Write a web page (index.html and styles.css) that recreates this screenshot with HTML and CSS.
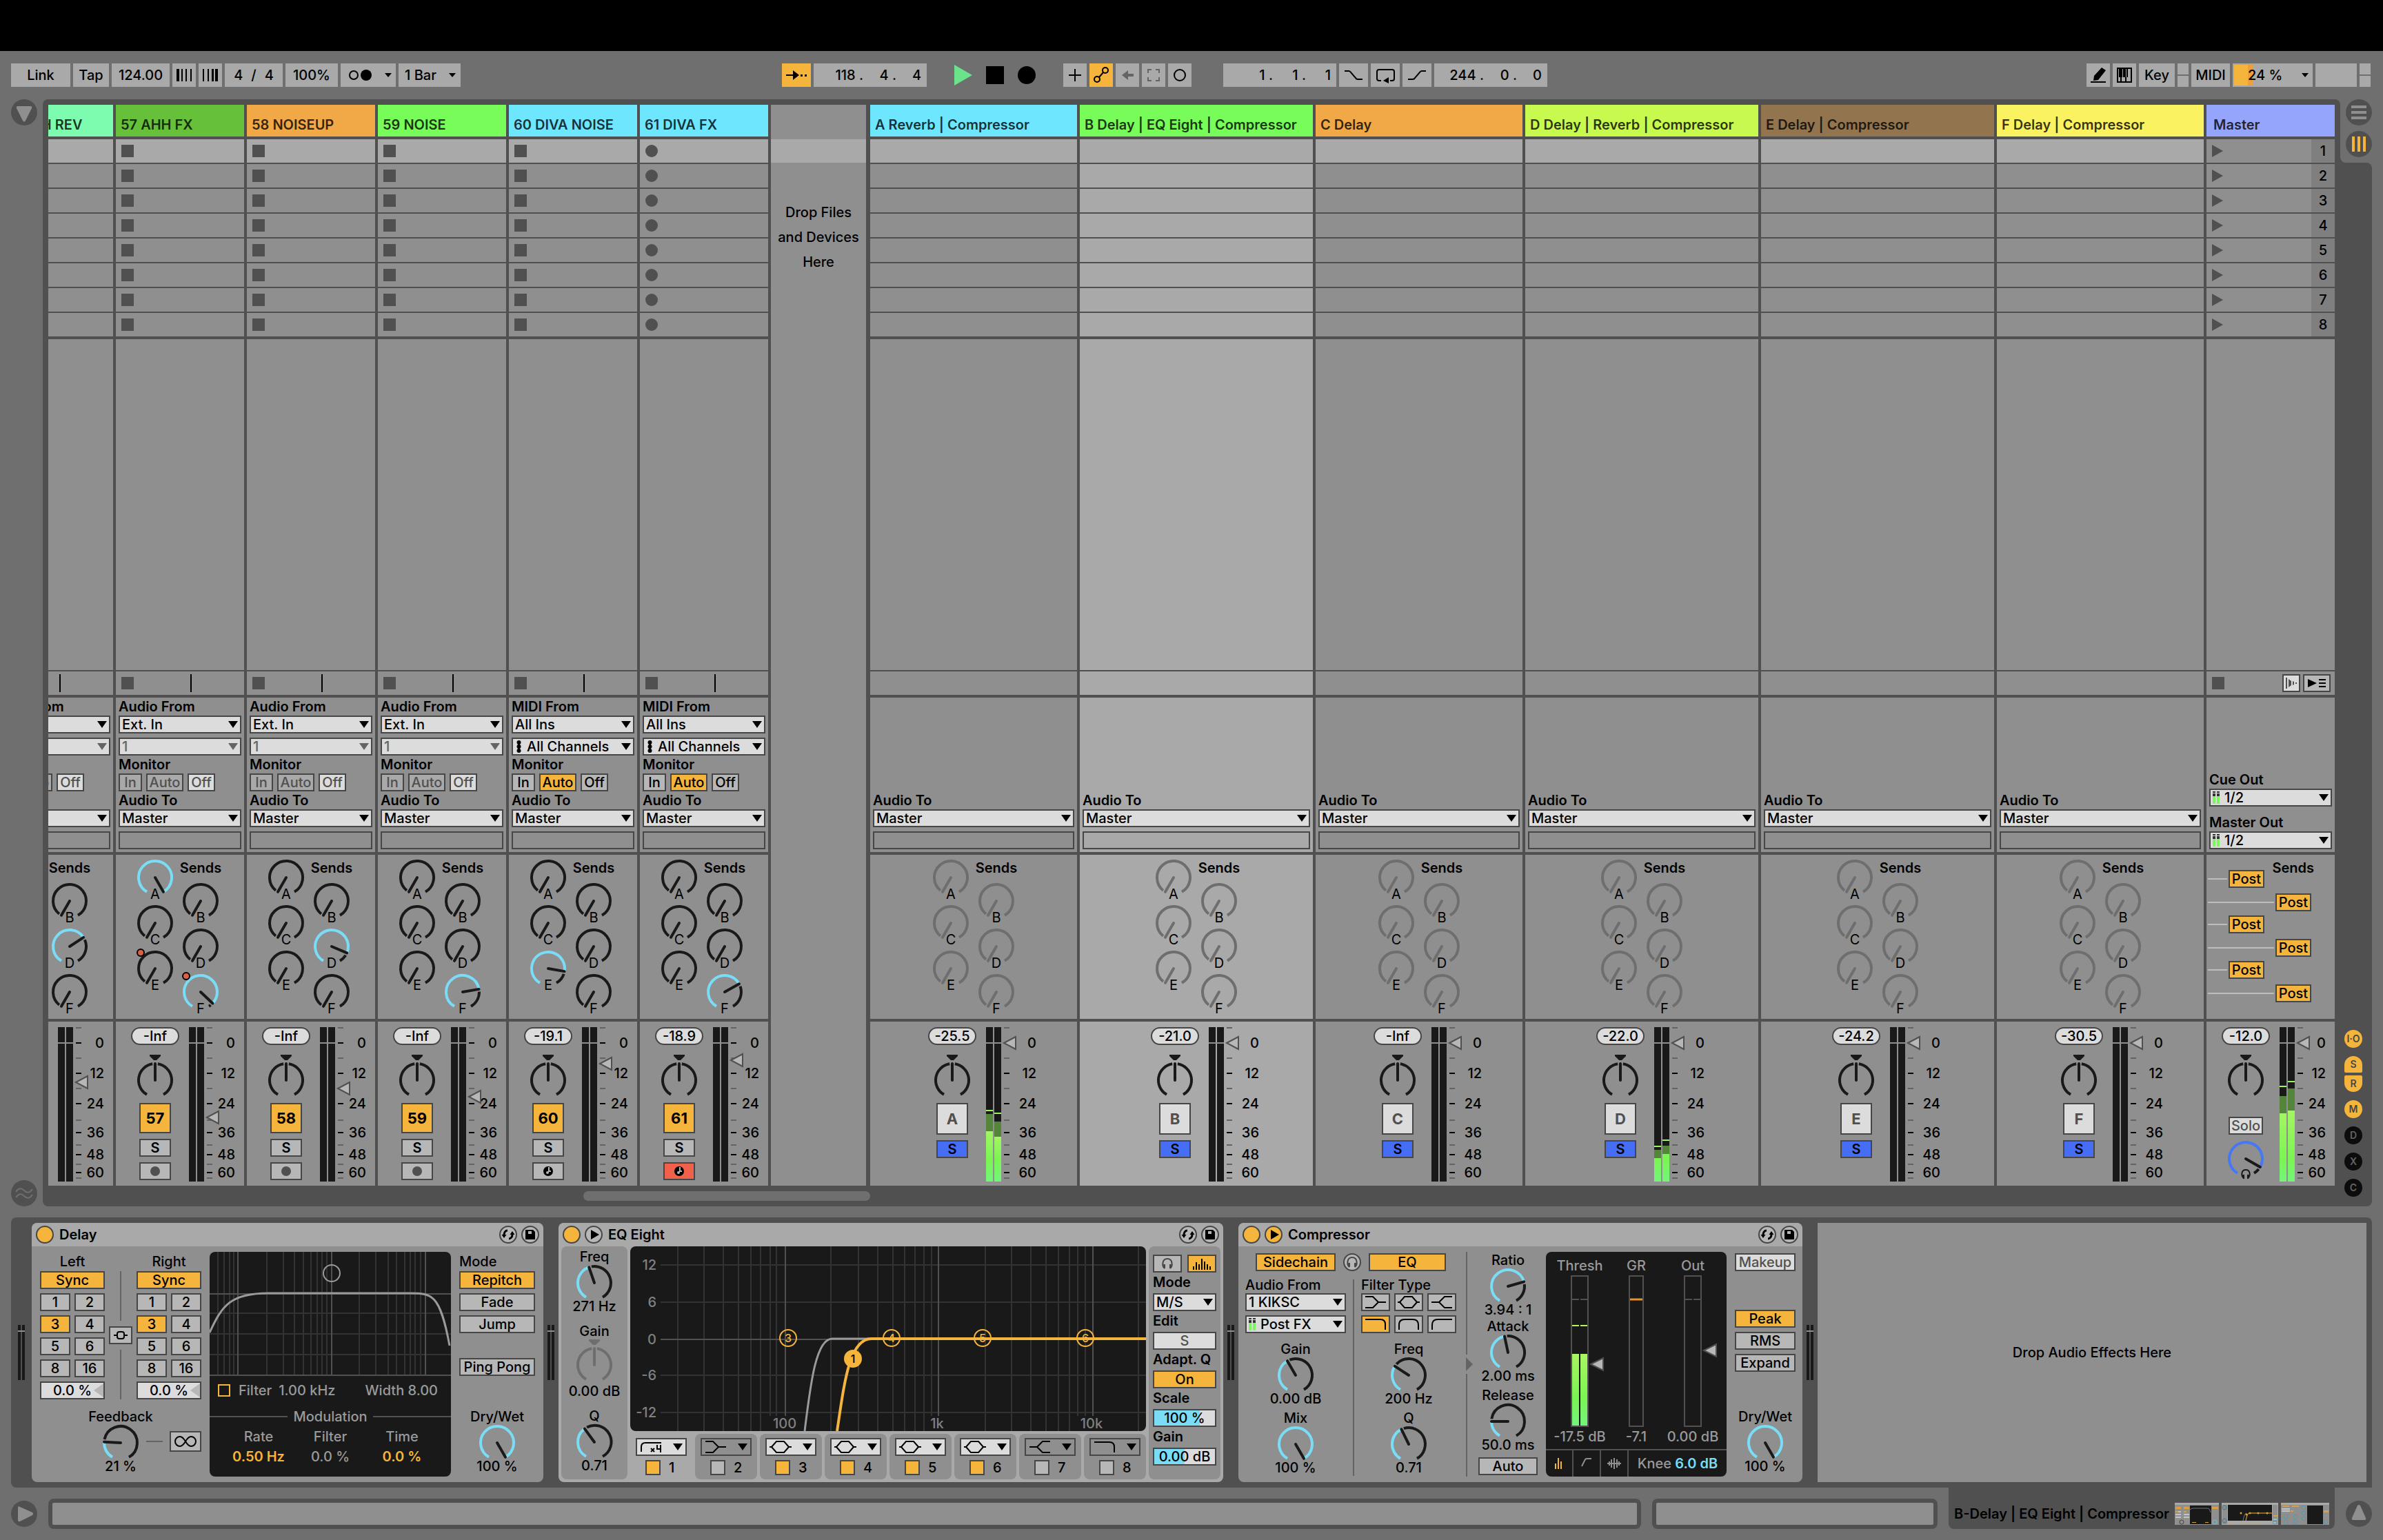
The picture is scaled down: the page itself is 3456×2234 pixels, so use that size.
FILE: index.html
```
<!DOCTYPE html>
<html lang="en">
<head>
<meta charset="utf-8">
<title>Live Set</title>
<link rel="stylesheet" href="styles.css">
</head>
<body>
<svg class="defs" aria-hidden="true">
  <symbol id="i-swap" viewBox="0 0 26 26"><path d="M7 15v-2c0-3 2-6 5-6M19 11v2c0 3-2 6-5 6" fill="none" stroke="#000" stroke-width="3"/><path d="M3.500 13h7L7 18zM15.500 13h7L19 8z"/></symbol>
  <symbol id="i-save" viewBox="0 0 26 26"><path d="M6 6h11l3 3v11H6z"/><path d="M10 8h5v4h-5z" fill="#b7b7b7"/></symbol>
  <symbol id="i-play" viewBox="0 0 26 26"><path d="M9 6l12 7-12 7z"/></symbol>
  <symbol id="i-phones" viewBox="0 0 26 26"><path d="M9 20C5 17 5 6 13 6s8 11 4 14" fill="none" stroke="currentColor" stroke-width="2"/><path d="M7 14h3v6H8zM16 14h3l-1 6h-2z" fill="currentColor"/></symbol>
  <symbol id="f-lowshelf" viewBox="0 0 32 20"><path d="M1 2h11l8 8-8 8H1M20 10h11" fill="none" stroke="#000" stroke-width="2"/></symbol>
  <symbol id="f-bell" viewBox="0 0 32 20"><path d="M0 10h3l7-8h11l7 8h4M3 10l7 8h11l7-8" fill="none" stroke="#000" stroke-width="2"/></symbol>
  <symbol id="f-highshelf" viewBox="0 0 32 20"><path d="M31 2H20l-8 8 8 8h11M12 10H1" fill="none" stroke="#000" stroke-width="2"/></symbol>
  <symbol id="f-lowpass" viewBox="0 0 32 20"><path d="M1 3h22q7 0 7 7v8" fill="none" stroke="#000" stroke-width="2"/></symbol>
  <symbol id="f-bandpass" viewBox="0 0 32 20"><path d="M2 18v-7q0-8 8-8h12q8 0 8 8v7" fill="none" stroke="#000" stroke-width="2"/></symbol>
  <symbol id="f-highpass" viewBox="0 0 32 20"><path d="M2 18v-7q0-8 8-8h21" fill="none" stroke="#000" stroke-width="2"/></symbol>
  <symbol id="f-highpass4" viewBox="0 0 32 20"><path d="M2 17v-7q0-6 6-6h23M16 12l5 5M21 12l-5 5M25 7v6h6M30 7v11" fill="none" stroke="#000" stroke-width="2"/></symbol>
  <symbol id="i-levels" viewBox="0 0 12 20"><path d="M1 1h4v2H1zM7 1h4v2H7zM1 4h4v4H1zM7 4h4v4H7z" fill="#333"/><path d="M1 8h4v11H1zM7 8h4v11H7z" fill="#7cf55f"/></symbol>
</svg>

<header class="toolbar">
  <div class="bar-group">
    <button class="tb w86">Link</button>
    <button class="tb w52">Tap</button>
    <input class="tb w84" aria-label="Tempo" value="124.00">
    <button class="tb w34" aria-label="Nudge down"><svg width="34" height="34"><path d="M6 8h4v18H6zM13 8h2v18h-2zM19 8h2v18h-2zM26 8h2v18h-2z"/></svg></button>
    <button class="tb w34" aria-label="Nudge up"><svg width="34" height="34"><path d="M6 8h2v18H6zM13 8h2v18h-2zM19 8h3v18h-3zM24 8h4v18h-4z"/></svg></button>
    <button class="tb w84 signature"><span>4</span><span>/</span><span>4</span></button>
    <button class="tb w76">100%</button>
    <button class="tb w80" aria-label="Metronome"><svg width="80" height="34"><circle cx="19" cy="17" r="6" fill="none" stroke="#000" stroke-width="2"/><circle cx="37" cy="17" r="8"/><path d="M64 14h10l-5 6z"/></svg></button>
    <div class="tb w90 quantize"><select aria-label="Quantization"><option>1 Bar</option></select></div>
  </div>
  <span class="space-a"></span>
  <div class="bar-group">
    <button class="tb w42 on" aria-label="Follow"><svg width="42" height="34"><path d="M6 16h10v-6l9 7-9 7v-6H6zM27 16h3v3h-3zM33 16h3v3h-3z"/></svg></button>
    <div class="tb position"><input aria-label="Bar" value="118 ."><input aria-label="Beat" value="4 ."><input aria-label="Sixteenth" value="4"></div>
  </div>
  <div class="bar-group transport">
    <button aria-label="Play"><svg width="26" height="34"><path d="M0 2v30l26-15z" fill="#6be38b"/></svg></button>
    <button aria-label="Stop"><svg width="26" height="34"><path d="M0 4h26v26H0z"/></svg></button>
    <button aria-label="Record"><svg width="26" height="34"><circle cx="13" cy="17" r="13"/></svg></button>
  </div>
  <div class="bar-group">
    <button class="tb w34" aria-label="Overdub"><svg width="34" height="34"><path d="M16 8h2v8h8v2h-8v8h-2v-8H8v-2h8z"/></svg></button>
    <button class="tb w34 on" aria-label="Automation arm"><svg width="34" height="34" fill="none" stroke="#000" stroke-width="2"><circle cx="23" cy="10" r="4"/><circle cx="11" cy="23" r="4"/><path d="M14 20l6-7"/></svg></button>
    <button class="tb w34" aria-label="Re-enable automation"><svg width="34" height="34"><path d="M9 17l9-7v5h8v4h-8v5z" fill="#646464"/></svg></button>
    <button class="tb w34" aria-label="Capture"><svg width="34" height="34"><path d="M9 14V9h5M20 9h5v5M25 20v5h-5M14 25H9v-5" fill="none" stroke="#646464" stroke-width="2"/></svg></button>
    <button class="tb w34" aria-label="Session record"><svg width="34" height="34"><circle cx="17" cy="17" r="8" fill="none" stroke="#000" stroke-width="2"/></svg></button>
  </div>
  <div class="bar-group loop">
    <div class="tb position"><input aria-label="Loop start bar" value="1 ."><input aria-label="Loop start beat" value="1 ."><input aria-label="Loop start sixteenth" value="1"></div>
    <button class="tb w42" aria-label="Punch in"><svg width="42" height="34"><path d="M8 11h6q2 0 3 2l7 8q1 2 3 2h7" fill="none" stroke="#000" stroke-width="2"/></svg></button>
    <button class="tb w42" aria-label="Loop"><svg width="42" height="34"><path d="M15 25h-3q-3 0-3-3V12q0-3 3-3h19q3 0 3 3v10q0 3-3 3h-3" fill="none" stroke="#000" stroke-width="2"/><path d="M26 20v9l-8-4z"/></svg></button>
    <button class="tb w42" aria-label="Punch out"><svg width="42" height="34"><path d="M8 23h7q2 0 3-2l7-8q1-2 3-2h6" fill="none" stroke="#000" stroke-width="2"/></svg></button>
    <div class="tb position"><input aria-label="Loop bars" value="244 ."><input aria-label="Loop beats" value="0 ."><input aria-label="Loop sixteenths" value="0"></div>
  </div>
  <span class="space-b"></span>
  <div class="bar-group">
    <button class="tb w34" aria-label="Draw mode"><svg width="34" height="34"><path d="M22 6l6 4-11 14-7 1 1-7zM6 26h22v2H6z"/></svg></button>
    <button class="tb w34" aria-label="Computer keyboard"><svg width="34" height="34"><path d="M6 6h22v22H6z"/><path d="M8 8h1v12h2v6H8zM14 8h1v12h3v6h-5v-6h1zM19 8h1v12h2v-12h4v18h-6v-6h-1z" fill="#a9a9a9"/></svg></button>
    <button class="tb w52">Key</button>
    <span class="lamps"><i></i><i></i></span>
    <button class="tb w56">MIDI</button>
    <button class="tb cpu">24 %<svg width="10" height="6"><path d="M0 0h10l-5 6z"/></svg></button>
    <span class="tb w60"></span>
    <span class="lamps"><i></i><i></i></span>
  </div>
</header>

<main class="session">
  <div class="rail">
    <button class="round" aria-label="Show browser"><svg width="38" height="38"><path d="M10 10h18q3 0 2 3l-9 18q-2 3-4 0L8 13q-1-3 2-3z" fill="#8f8f8f"/></svg></button>
    <button class="round" aria-label="Groove pool"><svg width="38" height="38" fill="none" stroke="#6f6f6f" stroke-width="2"><path d="M7 17c4-6 8-6 12-2s8 4 12-2M7 25c4-6 8-6 12-2s8 4 12-2"/></svg></button>
  </div>
  <section class="mixer-panel">
    <div class="columns">
      <div class="tracks" id="tracks"></div>
      <div class="drop-tracks"><div class="drop-slot"></div><p>Drop Files<br>and Devices<br>Here</p></div>
      <div class="returns" id="returns"></div>
    </div>
    <div class="scrollbar"><span></span></div>
  </section>
  <div class="rail-right">
    <div class="view-switch">
      <button class="round" aria-label="Arrangement view"><svg width="38" height="38"><path d="M8 9h22v4H8zM8 17h22v4H8zM8 25h22v4H8z" fill="#8f8f8f"/></svg></button>
      <button class="round" aria-label="Session view"><svg width="38" height="38"><path d="M9 8h4v22H9zM17 8h4v22h-4zM25 8h4v22h-4z" fill="#f5b43c"/></svg></button>
    </div>
    <div class="sections">
      <button class="dot">I·O</button>
      <span class="dot-pair"><button class="dot">S</button><button class="dot">R</button></span>
      <button class="dot">M</button>
      <button class="dot dark">D</button>
      <button class="dot dark">X</button>
      <button class="dot dark">C</button>
    </div>
  </div>
</main>

<section class="devices">
  <div class="dev-meter"><i></i><i></i></div>

  <article class="device delay">
    <header><button class="led" aria-label="Delay on"></button><h2>Delay</h2><button class="led icon" aria-label="Hot-swap preset"><svg><use href="#i-swap"/></svg></button><button class="led icon" aria-label="Save preset"><svg><use href="#i-save"/></svg></button></header>
    <div class="delay-body">
      <div class="delay-time">
        <div class="delay-cols">
          <div class="beats"><h3>Left</h3><button class="btn wide on">Sync</button><button class="btn">1</button><button class="btn">2</button><button class="btn on">3</button><button class="btn">4</button><button class="btn">5</button><button class="btn">6</button><button class="btn">8</button><button class="btn">16</button><span class="offset"><input class="field" aria-label="Left offset" value="0.0 %"></span></div>
          <div class="link"><i></i><button class="btn" aria-label="Link channels"><svg width="30" height="22" fill="none" stroke="#000" stroke-width="2"><path d="M5 11h5M20 11h5M13 6h4q3 0 3 3v4q0 3-3 3h-4q-3 0-3-3V9q0-3 3-3z"/></svg></button><i></i></div>
          <div class="beats"><h3>Right</h3><button class="btn wide on">Sync</button><button class="btn">1</button><button class="btn">2</button><button class="btn on">3</button><button class="btn">4</button><button class="btn">5</button><button class="btn">6</button><button class="btn">8</button><button class="btn">16</button><span class="offset"><input class="field" aria-label="Right offset" value="0.0 %"></span></div>
        </div>
        <div class="feedback">
          <div class="unit"><span>Feedback</span><span class="dial" data-v="0.21" data-name="Feedback"></span><span>21 %</span></div>
          <i></i>
          <button class="btn freeze" aria-label="Freeze"><svg width="32" height="20" viewBox="-1 0 32 20"><path d="M15 10c-3-5-5-7-8-7a7 7 0 0 0 0 14c3 0 5-2 8-7s5-7 8-7a7 7 0 0 1 0 14c-3 0-5-2-8-7z" fill="none" stroke="#000" stroke-width="2"/></svg></button>
        </div>
      </div>
      <div class="screen delay-screen">
        <svg class="graph" width="350" height="180" fill="none">
          <path d="M12 0v179M21 0v179M29 0v179M35 0v179M83 0v179M107 0v179M123 0v179M136 0v179M147 0v179M156 0v179M163 0v179M170 0v179M217 0v179M241 0v179M259 0v179M271 0v179M283 0v179M291 0v179M298 0v179M306 0v179M0 89h350M0 119h350M0 149h350" stroke="#333" stroke-width="2"/>
          <path d="M41 0v179M177 0v179M313 0v179M0 61h350M0 179h350" stroke="#505050" stroke-width="2"/>
          <path d="M0 117C18 78 30 60 85 60H290C322 60 334 60 348 136" stroke="#9a9a9a" stroke-width="3"/>
          <circle cx="177" cy="31" r="12" stroke="#9a9a9a" stroke-width="2"/>
        </svg>
        <div class="filter-row"><label><input type="checkbox">Filter</label><span>1.00 kHz</span><span class="push">Width 8.00</span></div>
        <div class="mod-title"><i></i>Modulation<i></i></div>
        <div class="mod-grid"><span>Rate</span><span>Filter</span><span>Time</span><b>0.50 Hz</b><span>0.0 %</span><b>0.0 %</b></div>
      </div>
      <div class="delay-mode">
        <h3>Mode</h3>
        <button class="btn on">Repitch</button><button class="btn">Fade</button><button class="btn">Jump</button>
        <button class="btn ping">Ping Pong</button>
        <div class="unit"><span>Dry/Wet</span><span class="dial" data-v="1" data-name="Delay dry/wet"></span><span>100 %</span></div>
      </div>
    </div>
  </article>

  <div class="dev-meter"><i></i><i></i></div>

  <article class="device eq">
    <header><button class="led" aria-label="EQ Eight on"></button><button class="led icon" aria-label="Expand display"><svg><use href="#i-play"/></svg></button><h2>EQ Eight</h2><button class="led icon" aria-label="Hot-swap preset"><svg><use href="#i-swap"/></svg></button><button class="led icon" aria-label="Save preset"><svg><use href="#i-save"/></svg></button></header>
    <div class="eq-body">
      <div class="eq-side knobs">
        <div class="unit"><span>Freq</span><span class="dial" data-v="0.437" data-name="Band frequency"></span><span>271 Hz</span></div>
        <div class="unit centred"><span>Gain</span><span class="dial" data-kind="pan" data-off="1" data-v="0.5" data-name="Band gain"></span><span>0.00 dB</span></div>
        <div class="unit"><span>Q</span><span class="dial" data-v="0.38" data-name="Band Q"></span><span>0.71</span></div>
      </div>
      <div class="eq-main">
        <svg class="screen eq-screen" width="748" height="268" fill="none">
          <path d="M69 0v268M107 0v268M135 0v268M157 0v268M175 0v268M189 0v268M203 0v246M212 0v246M291 0v268M331 0v268M359 0v268M381 0v268M398 0v268M413 0v268M426 0v268M437 0v246M515 0v268M553 0v268M581 0v268M603 0v268M621 0v268M637 0v268M649 0v246M660 0v246M737 0v268M44 27h704M44 81h704M44 187h704M44 241h704" stroke="#333" stroke-width="2"/>
          <path d="M225 0v246M447 0v246M671 0v246M44 135h704" stroke="#505050" stroke-width="2"/>
          <g class="axis"><text x="38" y="34">12</text><text x="38" y="88">6</text><text x="38" y="142">0</text><text x="38" y="194">-6</text><text x="38" y="248">-12</text></g>
          <g class="axis-x"><text x="224" y="264">100</text><text x="445" y="264">1k</text><text x="669" y="264">10k</text></g>
          <path d="M253 268C262 194 270 134 293 134H350" stroke="#9a9a9a" stroke-width="3"/>
          <path d="M300 268C311 194 318 134 350 134H748" stroke="#f5b43c" stroke-width="4"/>
          <g stroke="#f5b43c" stroke-width="2"><circle cx="229" cy="133" r="12"/><circle cx="379" cy="133" r="12"/><circle cx="511" cy="133" r="12"/><circle cx="660" cy="133" r="12"/></g>
          <circle cx="323" cy="163" r="13" fill="#f5b43c"/>
          <g class="nodes"><text x="229" y="139">3</text><text x="379" y="139">4</text><text x="511" y="139">5</text><text x="660" y="139">6</text></g>
          <text class="node-on" x="323" y="169">1</text>
        </svg>
        <div class="bands" id="bands"></div>
      </div>
      <div class="eq-side eq-opts">
        <div class="pair"><button class="btn dim" aria-label="Audition"><svg width="26" height="26"><use href="#i-phones"/></svg></button><button class="btn on" aria-label="Analyze"><svg width="30" height="20"><path d="M2 14h2v5H2zM6 8h2v11H6zM10 11h2v8h-2zM14 3h2v16h-2zM18 7h2v12h-2zM22 11h2v8h-2zM26 14h2v5h-2z"/></svg></button></div>
        <label for="eqmode">Mode</label><span class="menu"><select id="eqmode"><option>M/S</option></select></span>
        <label for="eqedit">Edit</label><button class="btn light" id="eqedit">S</button>
        <label for="eqadapt">Adapt. Q</label><button class="btn on" id="eqadapt">On</button>
        <label for="eqscale">Scale</label><input class="field fill-scale" id="eqscale" value="100 %">
        <label for="eqgain">Gain</label><input class="field fill-gain" id="eqgain" value="0.00 dB">
      </div>
    </div>
  </article>

  <div class="dev-meter"><i></i><i></i></div>

  <article class="device comp">
    <header><button class="led" aria-label="Compressor on"></button><button class="led icon on" aria-label="Show sidechain"><svg><use href="#i-play"/></svg></button><h2>Compressor</h2><button class="led icon" aria-label="Hot-swap preset"><svg><use href="#i-swap"/></svg></button><button class="led icon" aria-label="Save preset"><svg><use href="#i-save"/></svg></button></header>
    <div class="comp-body">
      <div class="sidechain">
        <div class="sc-top"><button class="btn on w116">Sidechain</button><button class="led icon dim" aria-label="Listen"><svg><use href="#i-phones"/></svg></button><button class="btn on w112">EQ</button></div>
        <div class="sc-cols">
          <div class="sc-src">
            <label for="scfrom">Audio From</label>
            <span class="menu"><select id="scfrom"><option>1 KIKSC</option></select></span>
            <span class="menu with-icon"><svg width="12" height="20"><use href="#i-levels"/></svg><select aria-label="Tap point"><option>Post FX</option></select></span>
            <div class="unit"><span>Gain</span><span class="dial" data-v="0.4" data-name="Sidechain gain"></span><span>0.00 dB</span></div>
            <div class="unit"><span>Mix</span><span class="dial" data-v="1" data-name="Sidechain mix"></span><span>100 %</span></div>
          </div>
          <i class="rule"></i>
          <div class="sc-eq">
            <h3>Filter Type</h3>
            <div class="types">
              <button class="btn" aria-label="Low shelf"><svg><use href="#f-lowshelf"/></svg></button><button class="btn" aria-label="Bell"><svg><use href="#f-bell"/></svg></button><button class="btn" aria-label="High shelf"><svg><use href="#f-highshelf"/></svg></button>
              <button class="btn on" aria-label="Low-pass"><svg><use href="#f-lowpass"/></svg></button><button class="btn" aria-label="Band-pass"><svg><use href="#f-bandpass"/></svg></button><button class="btn" aria-label="High-pass"><svg><use href="#f-highpass"/></svg></button>
            </div>
            <div class="unit"><span>Freq</span><span class="dial" data-v="0.31" data-name="Sidechain frequency"></span><span>200 Hz</span></div>
            <div class="unit"><span>Q</span><span class="dial" data-v="0.413" data-name="Sidechain Q"></span><span>0.71</span></div>
          </div>
        </div>
      </div>
      <div class="fold"><i></i><svg width="10" height="20"><path d="M0 0l10 10L0 20z" fill="#646464"/></svg><i></i></div>
      <div class="envelope">
        <div class="unit"><span>Ratio</span><span class="dial" data-v="0.747" data-name="Ratio"></span><span>3.94 : 1</span></div>
        <div class="unit"><span>Attack</span><span class="dial" data-v="0.46" data-name="Attack"></span><span>2.00 ms</span></div>
        <div class="unit"><span>Release</span><span class="dial" data-v="0.2" data-name="Release"></span><span>50.0 ms</span></div>
        <button class="btn">Auto</button>
      </div>
      <div class="screen comp-screen">
        <div class="comp-meters">
          <span>Thresh</span><span>GR</span><span>Out</span>
          <svg width="60" height="220"><defs><linearGradient id="lv" x1="0" y1="0" x2="0" y2="1"><stop offset="0" stop-color="#a9f562"/><stop offset="0.600" stop-color="#7bf553"/><stop offset="1" stop-color="#73f57b"/></linearGradient></defs><path d="M1 1h24v218H1zM1 35h11M14 35h11" fill="none" stroke="#505050" stroke-width="2"/><path d="M2 114h10v104H2zM14 114h10v104H14z" fill="url(#lv)"/><path d="M2 72h10v2H2zM14 72h10v2H14z" fill="#b4f55a"/><path d="M29 129l18-9v18z" fill="#b7b7b7" stroke="#505050" stroke-width="2"/></svg>
          <svg width="22" height="220"><path d="M1 1h20v218H1z" fill="none" stroke="#505050" stroke-width="2"/><path d="M2 35h18" stroke="#e8912d" stroke-width="3"/></svg>
          <svg width="60" height="220"><path d="M1 1h24v218H1zM1 35h11M14 35h11" fill="none" stroke="#505050" stroke-width="2"/><path d="M29 109l18-9v18z" fill="#b7b7b7" stroke="#505050" stroke-width="2"/></svg>
          <span>-17.5 dB</span><span>-7.1</span><span>0.00 dB</span>
        </div>
        <div class="comp-foot">
          <button aria-label="Collapsed view"><svg width="14" height="16"><path d="M1 8h2v8H1zM5 0h2v16H5zM9 5h2v11H9z" fill="#f5b43c"/></svg></button>
          <button aria-label="Transfer curve"><svg width="16" height="16"><path d="M1 12L6 2q1-1 3-1h6" fill="none" stroke="#8f8f8f" stroke-width="2"/></svg></button>
          <button aria-label="Activity view"><svg width="20" height="16"><path d="M0 8h20M3 5v6M6 2v12M10 0v16M14 2v12M17 5v6" stroke="#8f8f8f" stroke-width="2"/></svg></button>
          <span>Knee <b>6.0 dB</b></span>
        </div>
      </div>
      <div class="comp-mode">
        <button class="btn light">Makeup</button>
        <button class="btn on peak">Peak</button><button class="btn">RMS</button><button class="btn">Expand</button>
        <div class="unit"><span>Dry/Wet</span><span class="dial" data-v="1" data-name="Compressor dry/wet"></span><span>100 %</span></div>
      </div>
    </div>
  </article>

  <div class="dev-meter"><i></i><i></i></div>
  <div class="drop-devices">Drop Audio Effects Here</div>
</section>

<footer class="status">
  <button class="round" aria-label="Show info"><svg width="38" height="38"><path d="M10 10q0-3 3-1l18 8q2 2 0 4l-18 9q-3 1-3-2z" fill="#8f8f8f"/></svg></button>
  <div class="status-box grow"></div>
  <div class="status-box"></div>
  <div class="chain"><span>B-Delay | EQ Eight | Compressor</span>
    <svg width="64" height="32"><path d="M0 0h64v32H0z" fill="#8f8f8f"/><path d="M0 0h64v3H0z" fill="#a9a9a9"/><path d="M22 4h31v27H22z" fill="#191919"/><path d="M22 10q2-2 5-2h21q3 0 4 6" fill="none" stroke="#777"/><path d="M1 6h8v3H1zM13 6h8v3h-8zM54 6h9v3h-9zM1 12h4v2H1zM13 12h4v2h-4zM25 28h6v1h-6zM44 28h5v1h-5z" fill="#d9a040"/><path d="M5 12h4v2H5zM1 16h8v2H1zM13 16h8v2h-8zM1 20h8v2H1zM13 20h8v2h-8z" fill="#c4c4c4"/><circle cx="58" cy="28" r="3" fill="none" stroke="#6fc0d0"/><circle cx="10" cy="28" r="3" fill="none" stroke="#444"/></svg>
    <svg width="82" height="32"><path d="M0 0h82v32H0z" fill="#a9a9a9"/><path d="M1 3h7v28H1zM74 3h7v28h-7z" fill="#8f8f8f"/><path d="M9 3h64v23H9z" fill="#191919"/><path d="M31 26q2-11 5-11" fill="none" stroke="#777"/><path d="M35 26q2-11 5-11h33" fill="none" stroke="#f5b43c"/><g fill="#d9a040"><circle cx="28" cy="15" r="1.500"/><circle cx="36" cy="17" r="1.500"/><circle cx="41" cy="15" r="1.500"/><circle cx="53" cy="15" r="1.500"/><circle cx="66" cy="15" r="1.500"/><path d="M75 18h6v2h-6zM12 29h2v2h-2zM27 29h2v2h-2zM35 29h2v2h-2zM43 29h2v2h-2zM51 29h2v2h-2z"/></g><path d="M75 23h5v2h-5zM75 28h4v2h-4z" fill="#6fd0e0"/><circle cx="4" cy="7" r="3" fill="none" stroke="#478"/><circle cx="4" cy="26" r="3" fill="none" stroke="#478"/></svg>
    <svg width="70" height="32"><path d="M0 0h70v32H0z" fill="#8f8f8f"/><path d="M0 0h70v3H0z" fill="#a9a9a9"/><path d="M38 4h23v27H38z" fill="#191919"/><path d="M2 4h10v2H2zM16 4h10v2H16zM14 11h4v2h-4zM62 11h7v3h-7z" fill="#d9a040"/><path d="M1 8h12v2H1zM1 11h12v2H1z" fill="#c4c4c4"/><g fill="none" stroke="#5a98a5"><circle cx="7" cy="20" r="3"/><circle cx="7" cy="28" r="3"/><circle cx="21" cy="20" r="3"/><circle cx="21" cy="28" r="3"/><circle cx="33" cy="7" r="3"/><circle cx="33" cy="15" r="3"/><circle cx="33" cy="23" r="3"/><circle cx="65" cy="28" r="3"/></g></svg>
  </div>
  <button class="round" aria-label="Hide device view"><svg width="38" height="38"><path d="M17 7q2-2 4 0l8 18q1 3-2 3H11q-3 0-2-3z" fill="#8f8f8f"/></svg></button>
</footer>
<script src="mixer.js"></script>
</body>
</html>
```
FILE: styles.css
```
* { box-sizing: border-box; margin: 0; padding: 0; }
body {
  min-height: 100vh; display: flex; flex-direction: column;
  background: #6f6f6f; border-top: 74px solid #000; color: #000;
  font: 500 20px/24px Inter, "Liberation Sans", sans-serif;
}
button, input, select { font: inherit; color: inherit; border: 0; background: none; border-radius: 0; appearance: none; opacity: 1; }
button { display: flex; align-items: center; justify-content: center; white-space: nowrap; }
svg { display: block; flex: none; }
i { display: block; }
h2, h3 { font: inherit; }
.defs { display: none; }

/* Toolbar */
.toolbar { display: flex; height: 70px; padding: 18px 18px 18px 16px; flex: none; }
.bar-group { display: flex; gap: 4px; }
.space-a { flex: 466; }
.space-b { flex: 782; }
.tb { height: 34px; background: #a9a9a9; text-align: center; }
.tb.on { background: #f5b43c; }
.w34 { width: 34px; } .w42 { width: 42px; } .w52 { width: 52px; } .w56 { width: 56px; }
.w60 { width: 60px; } .w76 { width: 76px; } .w80 { width: 80px; } .w84 { width: 84px; }
.w86 { width: 86px; } .w90 { width: 90px; } .w112 { width: 112px; } .w116 { width: 116px; }
.signature { gap: 12px; }
.quantize { display: flex; align-items: center; padding: 0 7px 0 9px; }
.quantize select { flex: 1; min-width: 0; }
.quantize::after { content: ""; border: 5px solid transparent; border-top: 6px solid #000; border-bottom: 0; }
.position { display: flex; width: 164px; padding-right: 8px; }
.position input { text-align: right; min-width: 0; flex: 1; }
.position input:nth-child(2) { flex: none; width: 48px; }
.position input:nth-child(3) { flex: none; width: 36px; }
.transport { gap: 20px; margin: 0 40px; }
.loop { margin-left: 46px; }
.lamps { display: flex; flex-direction: column; gap: 2px; width: 16px; }
.lamps i { flex: 1; background: #a9a9a9; }
.cpu { width: 116px; justify-content: space-between; padding: 0 6px 0 20px; border: solid #a9a9a9; border-width: 2px 0 2px 2px; background: linear-gradient(90deg, #f5b43c 20px, #ef9f37 20px 28px, #a9a9a9 28px); }

/* Session */
.session { flex: 1; display: flex; padding: 0 16px; }
.rail { width: 46px; display: flex; flex-direction: column; justify-content: space-between; }
.round { width: 38px; height: 38px; border-radius: 50%; background: #505050; flex: none; }
.mixer-panel { flex: 1; min-width: 0; display: flex; flex-direction: column; padding: 8px 8px 0; background: #505050; border-radius: 8px 8px 0 8px; }
.columns { flex: 1; display: flex; min-width: 0; }
.tracks { display: flex; gap: 4px; overflow: hidden; width: 1048px; padding-right: 4px; flex: none; }
.tracks .col:first-child { margin-left: -92px; }
.returns { display: flex; gap: 4px; margin-left: 6px; }
.col { flex: none; width: 186px; display: flex; flex-direction: column; }
.col.w300 { width: 300px; }
.col.w338 { width: 338px; }
.drop-tracks { flex: 1; background: #8f8f8f; padding-top: 50px; text-align: center; line-height: 36px; }
.drop-slot { height: 34px; margin-bottom: 54px; background: #a9a9a9; }
.scrollbar { height: 30px; padding: 8px 0 8px 776px; }
.scrollbar span { display: block; width: 416px; height: 14px; border-radius: 7px; background: #6f6f6f; }

.name { height: 46px; padding: 16px 0 4px 7px; line-height: 26px; font-weight: 600; color: rgba(0,0,0,.8); margin-bottom: 4px; white-space: nowrap; overflow: hidden; }
.master .name { padding-left: 10px; }
.slots { display: grid; gap: 2px; list-style: none; margin-bottom: 4px; }
.slots li { height: 34px; background: #8f8f8f; display: flex; align-items: center; padding-left: 8px; }
.slots li:first-child { background: #a9a9a9; }
.slots i { width: 18px; height: 18px; background: #505050; }
.slots i.disc { border-radius: 50%; }
.master .slots li { background: #8f8f8f; justify-content: space-between; }
.master .slots span { width: 34px; height: 34px; line-height: 34px; background: #7f7f7f; text-align: center; }
.area { background: #8f8f8f; flex: 1; margin-bottom: 2px; }
.clip-status { background: #8f8f8f; height: 34px; margin-bottom: 4px; display: flex; align-items: center; padding: 0 6px 0 8px; }
.clip-status .stop { width: 18px; height: 18px; background: #505050; }
.clip-status .pos { width: 2px; height: 26px; background: #000; margin-left: 82px; }
.clip-status .btn { width: 26px; margin-left: 4px; }
.clip-status .btn:nth-of-type(1) { margin-left: auto; }
.clip-status .btn.back { width: 40px; }
.io { background: #8f8f8f; height: 224px; margin-bottom: 4px; padding: 0 4px 4px; display: flex; flex-direction: column; justify-content: flex-end; }
.io label, .io h4 { font-weight: 600; font-size: 20px; line-height: 26px; }
.io .menu + .menu, .io .activity { margin-top: 6px; }
.io label.spaced { margin-top: 10px; }
.activity { height: 26px; border: 2px solid #464646; }
.monitor { display: flex; gap: 6px; }
.monitor .btn { width: 34px; }
.monitor .btn:nth-child(2) { width: 54px; }
.monitor .btn:nth-child(3) { width: 40px; }
.monitor.idle { color: #505050; }
.monitor.idle .btn { background: #a9a9a9; }
.monitor.idle .btn:nth-child(3) { background: #dcdcdc; }

.sends, .strip { background: #8f8f8f; height: 238px; }
.selected .sends, .selected .strip, .selected .io, .selected .area, .selected .clip-status, .selected .slots li { background: #a9a9a9; }
.sends { margin-bottom: 4px; padding-left: 24px; display: flex; }
.is-return .sends { justify-content: center; padding: 0; }
.sends > div { width: 66px; }
.sends h4 { font-weight: 600; font-size: 20px; height: 34px; line-height: 38px; text-align: center; }
.send { position: relative; height: 66px; padding: 7px 3px 0; }
.send b { position: absolute; left: 0; right: 0; bottom: -3px; text-align: center; font-weight: 400; }
.send .auto { position: absolute; left: 6px; top: 4px; width: 12px; height: 12px; border-radius: 50%; border: 2px solid #000; background: #dc5f46; }
.dial { position: relative; display: block; width: 60px; height: 48px; flex: none; }
.dial svg { overflow: visible; }
.dial input, .scale input { position: absolute; inset: 0; width: 100%; height: 100%; opacity: 0; }

.master .sends { padding: 0 34px 0 2px; display: block; position: relative; }
.master .sends h4 { position: absolute; right: 30px; top: 0; }
.posts { padding-top: 22px; }
.post { display: flex; align-items: center; gap: 2px; width: 82px; height: 26px; margin-bottom: 8px; }
.post::before { content: ""; flex: 1; height: 2px; background: #bdbdbd; }
.post .btn { width: 52px; }
.post.right { width: 150px; margin-bottom: 6px; }

.strip { display: flex; padding: 8px 0 0 22px; }
.is-return .strip { justify-content: center; padding-left: 0; }
.strip-in { display: flex; flex: none; }
.is-return .strip-in { width: 132px; }
.controls { width: 70px; margin-right: 14px; display: flex; flex-direction: column; align-items: center; flex: none; }
.peak-level { width: 70px; height: 26px; border: 2px solid #464646; border-radius: 13px; background: #dcdcdc; margin-bottom: 25px; flex: none; }
.activator { width: 46px; height: 46px; border: 2px solid #464646; background: #f5b43c; font-weight: 700; font-size: 22px; margin: 11px 0 8px; }
.is-return .activator { background: #dcdcdc; color: #505050; }
.controls .btn { width: 46px; margin-bottom: 8px; font-weight: 600; }
.btn.solo { background: #466ef5; }
.btn.armed { background: #f0604b; }
.controls .btn.cue { width: 50px; margin: 31px 0 9px; color: #505050; background: #dcdcdc; font-weight: 500; }
.phones { margin-top: -9px; }
.meter { position: relative; display: flex; gap: 2px; height: 224px; margin-right: 4px; flex: none; }
.meter i { width: 10px; background: #191919; }
.meter::after { content: ""; position: absolute; left: 0; right: 0; top: 22px; height: 2px; background: #8f8f8f; }
.scale { position: relative; flex: none; width: 48px; height: 224px; }
.scale > svg { overflow: visible; }
.scale text { text-anchor: end; font-size: 20px; }

/* Right rail */
.rail-right { width: 46px; display: flex; flex-direction: column; background: linear-gradient(90deg, #505050 8px, transparent 8px); }
.view-switch { height: 92px; display: flex; flex-direction: column; align-items: flex-end; gap: 8px; border-bottom-left-radius: 8px; background: #6f6f6f; }
.sections { flex: 1; background: #505050; border-radius: 0 8px 8px 0; padding: 0 8px 14px 0; display: flex; flex-direction: column; justify-content: flex-end; align-items: center; gap: 12px; }
.dot { width: 26px; height: 26px; border-radius: 50%; background: #f5b43c; color: #464646; font-size: 14px; line-height: 14px; font-weight: 600; }
.dot-pair { display: grid; gap: 4px; }
.dot-pair .dot { height: 24px; border-radius: 13px 13px 2px 2px; }
.dot-pair .dot:last-child { border-radius: 2px 2px 13px 13px; }
.dot.dark { background: #0c0c0c; color: #646464; }

/* Shared controls */
.btn { height: 26px; border: 2px solid #464646; background: #b7b7b7; line-height: 22px; flex: none; }
.btn.on { background: #f5b43c; }
.btn.light { background: #dcdcdc; color: #505050; }
.btn.dim, .led.dim { color: #464646; }
.menu { position: relative; display: flex; height: 26px; border: 2px solid #464646; background: #dcdcdc; flex: none; }
.menu select { width: 100%; height: 22px; padding-left: 3px; line-height: 22px; outline: 0; }
.menu::after { content: ""; position: absolute; right: 3px; top: 6px; border: 7px solid transparent; border-top: 10px solid #000; border-bottom: 0; pointer-events: none; }
.menu.off { color: #646464; }
.menu.off::after { border-top-color: #646464; }
.menu.with-icon svg { position: absolute; left: 2px; top: 1px; }
.menu.with-icon select { padding-left: 20px; }
.field { width: 100%; height: 26px; border: 2px solid #464646; background: #dcdcdc; text-align: center; }
.unit { width: 60px; display: flex; flex-direction: column; align-items: center; white-space: nowrap; }

/* Devices */
.devices { display: flex; height: 392px; flex: none; margin: 16px 16px 0; padding: 8px 8px 8px 10px; background: #505050; border-radius: 8px 8px 0 8px; }
.device { flex: none; margin: 0 6px; border-radius: 8px; background: #8f8f8f; overflow: hidden; }
.device.delay { margin-left: 10px; width: 742px; }
.device.eq { width: 964px; background: #a9a9a9; }
.device.comp { width: 818px; }
.device > header { display: flex; align-items: center; gap: 6px; height: 34px; padding: 0 6px; background: #a9a9a9; }
.device h2 { font-weight: 600; margin-right: auto; padding-left: 2px; }
.led { width: 26px; height: 26px; border: 2px solid #464646; border-radius: 50%; background: #f5b43c; flex: none; }
.led.icon { background: #b7b7b7; }
.led.icon.on { background: #f5b43c; }
.led svg { width: 26px; height: 26px; }
.dev-meter { align-self: center; position: relative; display: flex; gap: 2px; width: 10px; height: 80px; flex: none; }
.dev-meter i { width: 4px; background: #191919; }
.dev-meter::after { content: ""; position: absolute; left: 0; right: 0; top: 8px; height: 2px; background: #8f8f8f; }
.drop-devices { flex: 1; margin-left: 6px; background: #8f8f8f; display: flex; align-items: center; justify-content: center; }
.screen { background: #191919; border-radius: 8px; color: #9a9a9a; overflow: hidden; }

.delay-body { display: flex; gap: 12px; padding: 8px 12px; }
.delay-time { width: 234px; }
.delay-cols { display: flex; gap: 6px; }
.beats { display: grid; grid-template-columns: 44px 44px; gap: 6px; width: 94px; }
.beats h3 { grid-column: 1 / 3; height: 22px; text-align: center; line-height: 28px; }
.beats .wide, .offset { grid-column: 1 / 3; }
.offset { position: relative; display: block; height: 26px; }
.offset::after { content: ""; position: absolute; right: 2px; top: 3px; border: 10px solid transparent; border-right: 14px solid #b7b7b7; border-left: 0; }
.link { width: 34px; padding-top: 28px; display: flex; flex-direction: column; align-items: center; gap: 8px; }
.link i { width: 2px; flex: 1; background: #646464; }
.link .btn { width: 34px; }
.feedback { display: flex; align-items: center; justify-content: flex-end; margin-top: 13px; }
.feedback i { width: 24px; height: 2px; background: #646464; margin: 0 10px 0 7px; }
.btn.freeze { width: 46px; height: 30px; }
.delay-screen { width: 350px; height: 326px; }
.filter-row { display: flex; height: 42px; align-items: center; padding: 0 19px 0 12px; gap: 10px; }
.filter-row label { display: flex; align-items: center; gap: 12px; }
.filter-row input { width: 18px; height: 18px; border: 2px solid #f5b43c; }
.push { margin-left: auto; }
.mod-title { display: flex; align-items: center; gap: 8px; height: 34px; }
.mod-title i { flex: 1; height: 2px; background: #505050; }
.mod-grid { display: grid; grid-template-columns: 104px 104px 104px; justify-content: center; text-align: center; row-gap: 5px; }
.mod-grid b { font-weight: 600; color: #f5b43c; }
.delay-mode { width: 110px; display: flex; flex-direction: column; }
.delay-mode h3 { line-height: 28px; }
.delay-mode .btn { margin-bottom: 6px; }
.delay-mode .ping { margin: 30px 0 47px; }
.delay-mode .unit { align-self: center; }

.eq-body { display: flex; gap: 4px; padding: 0 4px 4px; }
.eq-side { height: 338px; border-radius: 8px; background: #8f8f8f; }
.eq-side.knobs { width: 96px; padding-top: 3px; display: flex; flex-direction: column; align-items: center; gap: 12px; }
.unit.centred .dial { margin: 11px 0 4px; }
.eq-main { width: 748px; }
.eq-screen text { font-size: 20px; fill: #808080; text-anchor: end; }
.eq-screen .axis-x text { text-anchor: middle; }
.eq-screen .nodes text, .eq-screen .node-on { font-size: 16px; fill: #f5b43c; text-anchor: middle; }
.eq-screen .node-on { fill: #000; }
.bands { display: grid; grid-template-columns: repeat(8, 90px); gap: 4px; margin-top: 4px; }
.band { height: 66px; padding: 6px 8px; border-radius: 8px; background: #8f8f8f; }
.band.current { background: none; }
.band button { position: relative; width: 74px; justify-content: flex-start; padding-left: 4px; background: #dcdcdc; }
.band.bypassed button { background: #8f8f8f; }
.band button svg { width: 32px; height: 20px; }
.band button::after { content: ""; border: 7px solid transparent; border-top: 10px solid #000; border-bottom: 0; margin-left: 16px; }
.band label { display: flex; align-items: center; gap: 12px; padding: 6px 0 0 14px; line-height: 22px; }
.band input { width: 22px; height: 22px; border: 2px solid #464646; background: #b7b7b7; }
.band input:checked { background: #f5b43c; }
.eq-opts { width: 104px; padding: 12px 6px; display: flex; flex-direction: column; }
.eq-opts label { line-height: 28px; height: 30px; font-weight: 600; }
.eq-opts .pair { display: flex; gap: 8px; }
.pair .btn { width: 42px; }
.field.fill-scale { background: linear-gradient(90deg, #7adcf5 66px, #dcdcdc 66px); }
.field.fill-gain { background: linear-gradient(90deg, #7adcf5 44px, #dcdcdc 44px); }

.comp-body { display: flex; padding: 8px 10px; }
.sidechain { width: 306px; padding-top: 2px; }
.sc-top { display: flex; justify-content: center; gap: 11px; margin-bottom: 12px; }
.sc-cols { display: flex; gap: 10px; }
.sc-cols label, .sc-cols h3 { line-height: 16px; margin-bottom: 4px; }
.rule { width: 2px; background: #646464; }
.sc-src { width: 146px; display: flex; flex-direction: column; }
.sc-src .menu + .menu { margin-top: 6px; }
.sc-src .unit, .sc-eq .unit { align-self: center; margin-top: 11px; }
.sc-src .unit + .unit, .sc-eq .unit + .unit { margin-top: 4px; }
.sc-eq { width: 138px; display: flex; flex-direction: column; }
.types { display: grid; grid-template-columns: 42px 42px 42px; gap: 6px; }
.types svg { width: 32px; height: 20px; }
.fold { width: 10px; margin: 0 8px 0 14px; display: flex; flex-direction: column; height: 326px; gap: 4px; }
.fold i { flex: 1; width: 2px; background: #646464; }
.envelope { width: 86px; margin-right: 12px; display: flex; flex-direction: column; align-items: center; }
.envelope .unit:nth-child(3) { margin: 4px 0 6px; }
.envelope .btn { width: 86px; }
.comp-screen { width: 262px; height: 326px; margin-right: 12px; }
.comp-meters { display: grid; grid-template-columns: 98px 66px 98px; text-align: center; height: 286px; padding-top: 6px; grid-template-rows: 28px 220px 32px; line-height: 28px; }
.comp-meters svg { margin: 0 auto; }
.comp-meters svg:nth-of-type(odd) { margin: 0 0 0 36px; }
.comp-foot { display: flex; height: 40px; border-top: 2px solid #505050; }
.comp-foot button { width: 40px; border-right: 2px solid #505050; }
.comp-foot span { flex: 1; text-align: center; line-height: 38px; white-space: nowrap; }
.comp-foot b { font-weight: 600; color: #7adcf5; }
.comp-mode { width: 88px; padding-top: 2px; display: flex; flex-direction: column; }
.comp-mode .btn { margin-bottom: 6px; }
.comp-mode .peak { margin-top: 50px; }
.comp-mode .unit { align-self: center; margin-top: 47px; }

/* Status bar */
.status { display: flex; align-items: center; height: 76px; padding: 0 16px; flex: none; }
.status-box { width: 414px; height: 44px; border: 6px solid #505050; border-radius: 8px; background: #8f8f8f; margin-left: 16px; }
.status-box.grow { flex: 1; }
.chain { align-self: flex-start; display: flex; align-items: center; gap: 4px; width: 560px; height: 60px; margin: 0 16px; padding: 16px 8px 0; background: #505050; border-radius: 0 0 8px 8px; }
.chain span { flex: 1; font-weight: 600; white-space: nowrap; }
```
FILE: mixer.js
```
const polar = (deg, r) => {
  const a = deg * Math.PI / 180;
  return (30 + r * Math.sin(a)).toFixed(1) + ' ' + (26 - r * Math.cos(a)).toFixed(1);
};
const arc = (from, to) => to <= from ? '' :
  `M${polar(from, 24)}A24 24 0 ${to - from > 180 ? 1 : 0} 1 ${polar(to, 24)}`;

// Rotary control: value 0..1 sweeps from -150 to 150 degrees.
function dial(v, { off, pan, name, blue = '#7adcf5' } = {}) {
  const ink = off ? '#6e6e6e' : '#191919';
  const a = -150 + 300 * v;
  const rest = pan ? arc(-150, -9) + arc(9, 150) : arc(a + 9, 150);
  const val = pan || v === 0 ? '' : arc(-150, a);
  return `<svg width="60" height="48" fill="none" stroke-width="4">
    <path d="${rest}" stroke="${ink}"/><path d="${val}" stroke="${blue}"/>
    <path d="M30 26L${polar(a, 24)}" stroke="${ink}" stroke-linecap="round"/>
    ${pan ? `<path d="M22-11h16v2l-6 6h-4l-6-6z" fill="${ink}"/>` : ''}</svg>
    <input type="range" min="0" max="1" step="0.001" value="${v}" aria-label="${name}">`;
}

const MAJOR = [[22, '0'], [66, '12'], [110, '24'], [152, '36'], [184, '48'], [210, '60']];
const MINOR = [0, 44, 88, 134, 170, 198, 218];
const scale = (t, labelX) => `<div class="scale"><svg width="48" height="224">
  ${MINOR.map(y => `<path d="M0 ${y}h8v2h-8z" fill="#646464"/>`).join('')}
  ${MAJOR.map(([y, s]) => `<path d="M0 ${y}h8v2h-8z"/><text x="${labelX}" y="${y + 8}">${s}</text>`).join('')}
  <path d="M0 ${t.fader}l17-9v18z" fill="#b7b7b7" stroke="#505050" stroke-width="2"/></svg>
  <input type="range" aria-label="${t.name} volume"></div>`;

// Each channel: [peak, recent, level] as distances from the top of the meter.
const bar = m => m ? `<i style="background:linear-gradient(#0000 ${m[0]}px,#9cf55a ${m[0]}px ${m[0] + 2}px,#0000 ${m[0] + 2}px),linear-gradient(#0000 ${m[2]}px,${m[2] > 180 ? '#7bf553' : '#a4f562'} ${m[2]}px,#7bf553 192px,#73f57b 224px),linear-gradient(#191919 ${m[1]}px,#55853a ${m[1]}px)"></i>` : '<i></i>';
const meter = m => `<div class="meter">${bar(m && m[0])}${bar(m && m[1])}</div>`;

const send = (letter, t, off) => `<div class="send"><span class="dial">${dial(t.sends?.[letter] || 0, { off, name: t.name + ' send ' + letter })}</span><b>${letter}</b>${t.auto?.includes(letter) ? '<span class="auto"></span>' : ''}</div>`;
const sends = (t, off) => `<div class="sends"><div>${['A', 'C', 'E'].map(l => send(l, t, off)).join('')}</div><div><h4>Sends</h4>${['B', 'D', 'F'].map(l => send(l, t, off)).join('')}</div></div>`;

const menu = (id, text, cls = '', icon = '') => `<span class="menu ${cls}">${icon}<select id="${id}" ${cls.includes('off') ? 'disabled' : ''}><option>${text}</option></select></span>`;
const slots = shape => `<ul class="slots">${`<li>${shape ? `<i class="${shape}"></i>` : ''}</li>`.repeat(8)}</ul>`;
const chans = '<svg width="12" height="20"><path d="M5 2h3v16H5z"/><circle cx="6.500" cy="4" r="3"/><circle cx="6.500" cy="10" r="3"/><circle cx="6.500" cy="16" r="3"/></svg>';
const levels = '<svg width="12" height="20"><use href="#i-levels"/></svg>';
const note = '<svg width="18" height="18"><circle cx="9" cy="9" r="7"/><path d="M10 3v6h3" fill="none" stroke="#b7b7b7" stroke-width="2"/><circle cx="8" cy="11" r="2" fill="#b7b7b7"/></svg>';
const disc = '<svg width="16" height="16"><circle cx="8" cy="8" r="7" fill="#505050"/></svg>';
const head = t => `<button class="peak-level">${t.peak}</button><span class="dial">${dial(0.5, { pan: true, name: t.name + ' pan' })}</span>`;

const TRACKS = [
  { n: 56, name: '56 AHHH REV', color: '#7dfcb0', peak: '-Inf', fader: 80, sends: { D: 0.69 } },
  { n: 57, name: '57 AHH FX', color: '#67c03a', peak: '-Inf', fader: 131, sends: { A: 1, F: 0.945 }, auto: 'EF' },
  { n: 58, name: '58 NOISEUP', color: '#f1a846', peak: '-Inf', fader: 89, sends: { D: 0.877 } },
  { n: 59, name: '59 NOISE', color: '#78fc5a', peak: '-Inf', fader: 101, sends: { F: 0.767 } },
  { n: 60, name: '60 DIVA NOISE', color: '#6ee6fd', peak: '-19.1', fader: 53, sends: { E: 0.833 }, midi: true },
  { n: 61, name: '61 DIVA FX', color: '#6ee6fd', peak: '-18.9', fader: 48, sends: { F: 0.703 }, midi: true, armed: true },
];
const RETURNS = [
  { n: 'A', name: 'A Reverb | Compressor', color: '#6ee6fd', w: 300, peak: '-25.5', meter: [[120, 126, 151], [124, 137, 159]] },
  { n: 'B', name: 'B Delay | EQ Eight | Compressor', color: '#78fc5a', w: 338, peak: '-21.0', selected: true },
  { n: 'C', name: 'C Delay', color: '#f1a846', w: 300, peak: '-Inf' },
  { n: 'D', name: 'D Delay | Reverb | Compressor', color: '#c8f94f', w: 338, peak: '-22.0', meter: [[172, 178, 190], [163, 172, 184]] },
  { n: 'E', name: 'E Delay | Compressor', color: '#92744f', w: 338, peak: '-24.2' },
  { n: 'F', name: 'F Delay | Compressor', color: '#fbf261', w: 300, peak: '-30.5' },
];

document.getElementById('tracks').innerHTML = TRACKS.map(t => `<section class="col">
  <h3 class="name" style="background:${t.color}">${t.name}</h3>
  ${slots(t.armed ? 'disc' : 'square')}
  <div class="area"></div>
  <div class="clip-status"><i class="stop"></i><i class="pos"></i></div>
  <div class="io">
    <label for="in${t.n}">${t.midi ? 'MIDI' : 'Audio'} From</label>
    ${menu('in' + t.n, t.midi ? 'All Ins' : 'Ext. In')}
    ${t.midi ? menu('ch' + t.n, 'All Channels', 'with-icon', chans) : menu('ch' + t.n, '1', 'off')}
    <h4>Monitor</h4>
    <div class="monitor ${t.midi ? '' : 'idle'}"><button class="btn">In</button><button class="btn ${t.midi ? 'on' : ''}">Auto</button><button class="btn">Off</button></div>
    <label for="out${t.n}">Audio To</label>
    ${menu('out' + t.n, 'Master')}
    <div class="activity"></div>
  </div>
  ${sends(t, false)}
  <div class="strip"><div class="strip-in"><div class="controls">${head(t)}
    <button class="activator">${t.n}</button><button class="btn">S</button>
    <button class="btn ${t.armed ? 'armed' : ''}" aria-label="Arm">${t.midi ? note : disc}</button></div>
    ${meter()}${scale(t, 41)}</div></div>
</section>`).join('');

document.getElementById('returns').innerHTML = RETURNS.map(t => `<section class="col is-return w${t.w} ${t.selected ? 'selected' : ''}">
  <h3 class="name" style="background:${t.color}">${t.name}</h3>
  ${slots('')}
  <div class="area"></div>
  <div class="clip-status"></div>
  <div class="io"><label for="out${t.n}">Audio To</label>${menu('out' + t.n, 'Master')}<div class="activity"></div></div>
  ${sends(t, true)}
  <div class="strip"><div class="strip-in"><div class="controls">${head(t)}
    <button class="activator">${t.n}</button><button class="btn solo">S</button></div>
    ${meter(t.meter)}${scale({ name: t.name, fader: 23 }, 47)}</div></div>
</section>`).join('') + `<section class="col master">
  <h3 class="name" style="background:#95a5fb">Master</h3>
  <ul class="slots">${[1, 2, 3, 4, 5, 6, 7, 8].map(n => `<li><svg width="16" height="18"><path d="M0 0l16 9-16 9z" fill="#505050"/></svg><span>${n}</span></li>`).join('')}</ul>
  <div class="area"></div>
  <div class="clip-status"><i class="stop"></i>
    <button class="btn light" aria-label="Stop clips"><svg width="18" height="18"><path d="M1 1h2v16H1zM5 3l4 3v6l-4 3zM11 6l2 1v4l-2 1zM15 8h2v2h-2z" fill="#505050"/></svg></button>
    <button class="btn back" aria-label="Back to arrangement"><svg width="28" height="18"><path d="M1 3l13 6-13 6zM17 3h10v2H17zM17 8h10v2H17zM17 13h10v2H17z"/></svg></button></div>
  <div class="io"><label for="cue">Cue Out</label>${menu('cue', '1/2', 'with-icon', levels)}
    <label class="spaced" for="main">Master Out</label>${menu('main', '1/2', 'with-icon', levels)}</div>
  <div class="sends"><h4>Sends</h4><div class="posts">${'<div class="post"><button class="btn on">Post</button></div><div class="post right"><button class="btn on">Post</button></div>'.repeat(3)}</div></div>
  <div class="strip"><div class="strip-in"><div class="controls">${head({ name: 'Master', peak: '-12.0' })}
    <button class="btn cue">Solo</button><span class="dial">${dial(0.9, { name: 'Cue volume', blue: '#4678f5' })}</span>
    <svg class="phones" width="18" height="18"><path d="M6 15C2 12 2 3 9 3s7 9 3 12" fill="none" stroke="#191919" stroke-width="2"/><path d="M4 10h3v6H5zM11 10h3l-1 6h-2z" fill="#191919"/></svg></div>
    ${meter([[85, 100, 125], [78, 89, 121]])}${scale({ name: 'Master', fader: 23 }, 41)}</div></div>
</section>`;

const BANDS = [['highpass4', 1], ['lowshelf', 0], ['bell', 1], ['bell', 1], ['bell', 1], ['bell', 1], ['highshelf', 0], ['lowpass', 0]];
document.getElementById('bands').innerHTML = BANDS.map(([shape, on], i) => `<div class="band ${i ? '' : 'current'} ${on ? '' : 'bypassed'}">
  <button class="btn" aria-haspopup="listbox" aria-label="Band ${i + 1} filter"><svg><use href="#f-${shape}"/></svg></button>
  <label><input type="checkbox" ${on ? 'checked' : ''}>${i + 1}</label></div>`).join('');

document.querySelectorAll('.dial[data-v]').forEach(el => {
  const d = el.dataset;
  el.innerHTML = dial(+d.v, { off: !!d.off, pan: d.kind === 'pan', name: d.name });
});
```
